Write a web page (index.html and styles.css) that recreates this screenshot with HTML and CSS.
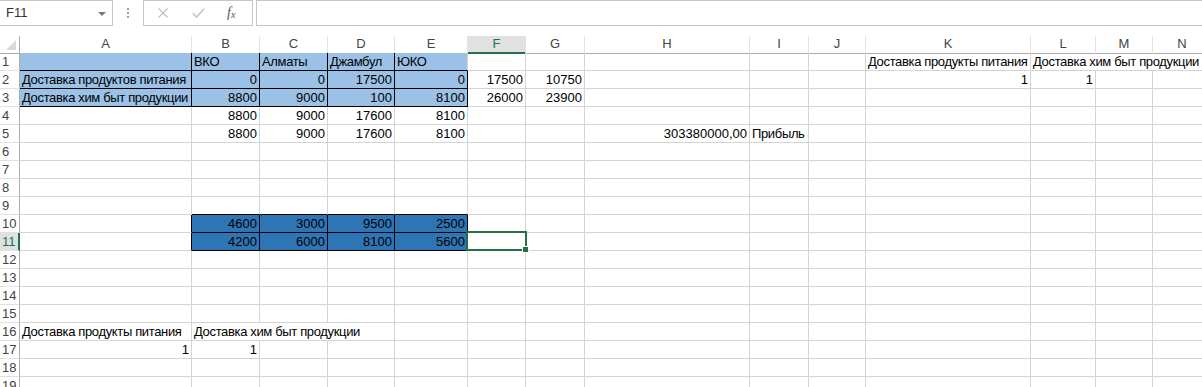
FILE: index.html
```
<!DOCTYPE html>
<html>
    <head>
        <meta charset="UTF-8">
        <link rel="stylesheet" href="styles.css">
        <title>Книга1 - Excel</title>
    </head>
    <body>
        <div class="bar">
            <div class="namebox">F11<span class="arrow"></span></div>
            <div class="grip"><span class="dots"></span></div>
            <div class="fxbox">
                <svg class="ico" width="12" height="10" viewBox="0 0 12 10"><path d="M1.5 0.5 L10.5 9.5 M10.5 0.5 L1.5 9.5" stroke="#C3C3C3" stroke-width="1.4" fill="none"/></svg>
                <svg class="ico" width="13" height="10" viewBox="0 0 13 10"><path d="M0.8 5.2 L4.6 9 L12.2 0.8" stroke="#C3C3C3" stroke-width="1.6" fill="none"/></svg>
                <span class="fx">f<sub>x</sub></span>
            </div>
            <div class="formula"></div>
        </div>

        <div class="sheet">
            <div class="row hd">
                <div class="corner"></div><div>A</div><div>B</div><div>C</div><div>D</div><div>E</div><div class="on">F</div><div>G</div><div>H</div><div>I</div><div>J</div><div>K</div><div>L</div><div>M</div><div>N</div>
            </div>
            <div class="row">
                <div class="rh">1</div><div class="c lb br bb"></div><div class="c lb br bb">ВКО</div><div class="c lb br bb">Алматы</div><div class="c lb br bb">Джамбул</div><div class="c lb bb">ЮКО</div><div class="c"></div><div class="c"></div><div class="c"></div><div class="c"></div><div class="c"></div><div class="c">Доставка продукты питания</div><div class="c s3">Доставка хим быт продукции</div>
            </div>
            <div class="row">
                <div class="rh">2</div><div class="c lb br bb">Доставка продуктов питания</div><div class="c lb br bb n">0</div><div class="c lb br bb n">0</div><div class="c lb br bb n">17500</div><div class="c lb br bb n">0</div><div class="c n">17500</div><div class="c n">10750</div><div class="c"></div><div class="c"></div><div class="c"></div><div class="c n">1</div><div class="c n">1</div><div class="c"></div><div class="c"></div>
            </div>
            <div class="row">
                <div class="rh">3</div><div class="c lb br bb">Доставка хим быт продукции</div><div class="c lb br bb n">8800</div><div class="c lb br bb n">9000</div><div class="c lb br bb n">100</div><div class="c lb br bb n">8100</div><div class="c n">26000</div><div class="c n">23900</div><div class="c"></div><div class="c"></div><div class="c"></div><div class="c"></div><div class="c"></div><div class="c"></div><div class="c"></div>
            </div>
            <div class="row">
                <div class="rh">4</div><div class="c"></div><div class="c n">8800</div><div class="c n">9000</div><div class="c n">17600</div><div class="c n">8100</div><div class="c"></div><div class="c"></div><div class="c"></div><div class="c"></div><div class="c"></div><div class="c"></div><div class="c"></div><div class="c"></div><div class="c"></div>
            </div>
            <div class="row">
                <div class="rh">5</div><div class="c"></div><div class="c n">8800</div><div class="c n">9000</div><div class="c n">17600</div><div class="c n">8100</div><div class="c"></div><div class="c"></div><div class="c n">303380000,00</div><div class="c">Прибыль</div><div class="c"></div><div class="c"></div><div class="c"></div><div class="c"></div><div class="c"></div>
            </div>
            <div class="row">
                <div class="rh">6</div><div class="c"></div><div class="c"></div><div class="c"></div><div class="c"></div><div class="c"></div><div class="c"></div><div class="c"></div><div class="c"></div><div class="c"></div><div class="c"></div><div class="c"></div><div class="c"></div><div class="c"></div><div class="c"></div>
            </div>
            <div class="row">
                <div class="rh">7</div><div class="c"></div><div class="c"></div><div class="c"></div><div class="c"></div><div class="c"></div><div class="c"></div><div class="c"></div><div class="c"></div><div class="c"></div><div class="c"></div><div class="c"></div><div class="c"></div><div class="c"></div><div class="c"></div>
            </div>
            <div class="row">
                <div class="rh">8</div><div class="c"></div><div class="c"></div><div class="c"></div><div class="c"></div><div class="c"></div><div class="c"></div><div class="c"></div><div class="c"></div><div class="c"></div><div class="c"></div><div class="c"></div><div class="c"></div><div class="c"></div><div class="c"></div>
            </div>
            <div class="row">
                <div class="rh">9</div><div class="c"></div><div class="c bb"></div><div class="c bb"></div><div class="c bb"></div><div class="c bb"></div><div class="c"></div><div class="c"></div><div class="c"></div><div class="c"></div><div class="c"></div><div class="c"></div><div class="c"></div><div class="c"></div><div class="c"></div>
            </div>
            <div class="row">
                <div class="rh">10</div><div class="c br"></div><div class="c db br bb n">4600</div><div class="c db br bb n">3000</div><div class="c db br bb n">9500</div><div class="c db br bb n">2500</div><div class="c"></div><div class="c"></div><div class="c"></div><div class="c"></div><div class="c"></div><div class="c"></div><div class="c"></div><div class="c"></div><div class="c"></div>
            </div>
            <div class="row">
                <div class="rh on">11</div><div class="c br"></div><div class="c db br bb n">4200</div><div class="c db br bb n">6000</div><div class="c db br bb n">8100</div><div class="c db br bb n">5600</div><div class="c sel"></div><div class="c"></div><div class="c"></div><div class="c"></div><div class="c"></div><div class="c"></div><div class="c"></div><div class="c"></div><div class="c"></div>
            </div>
            <div class="row">
                <div class="rh">12</div><div class="c"></div><div class="c"></div><div class="c"></div><div class="c"></div><div class="c"></div><div class="c"></div><div class="c"></div><div class="c"></div><div class="c"></div><div class="c"></div><div class="c"></div><div class="c"></div><div class="c"></div><div class="c"></div>
            </div>
            <div class="row">
                <div class="rh">13</div><div class="c"></div><div class="c"></div><div class="c"></div><div class="c"></div><div class="c"></div><div class="c"></div><div class="c"></div><div class="c"></div><div class="c"></div><div class="c"></div><div class="c"></div><div class="c"></div><div class="c"></div><div class="c"></div>
            </div>
            <div class="row">
                <div class="rh">14</div><div class="c"></div><div class="c"></div><div class="c"></div><div class="c"></div><div class="c"></div><div class="c"></div><div class="c"></div><div class="c"></div><div class="c"></div><div class="c"></div><div class="c"></div><div class="c"></div><div class="c"></div><div class="c"></div>
            </div>
            <div class="row">
                <div class="rh">15</div><div class="c"></div><div class="c"></div><div class="c"></div><div class="c"></div><div class="c"></div><div class="c"></div><div class="c"></div><div class="c"></div><div class="c"></div><div class="c"></div><div class="c"></div><div class="c"></div><div class="c"></div><div class="c"></div>
            </div>
            <div class="row">
                <div class="rh">16</div><div class="c">Доставка продукты питания</div><div class="c s3">Доставка хим быт продукции</div><div class="c"></div><div class="c"></div><div class="c"></div><div class="c"></div><div class="c"></div><div class="c"></div><div class="c"></div><div class="c"></div><div class="c"></div><div class="c"></div>
            </div>
            <div class="row">
                <div class="rh">17</div><div class="c n">1</div><div class="c n">1</div><div class="c"></div><div class="c"></div><div class="c"></div><div class="c"></div><div class="c"></div><div class="c"></div><div class="c"></div><div class="c"></div><div class="c"></div><div class="c"></div><div class="c"></div><div class="c"></div>
            </div>
            <div class="row">
                <div class="rh">18</div><div class="c"></div><div class="c"></div><div class="c"></div><div class="c"></div><div class="c"></div><div class="c"></div><div class="c"></div><div class="c"></div><div class="c"></div><div class="c"></div><div class="c"></div><div class="c"></div><div class="c"></div><div class="c"></div>
            </div>
            <div class="row">
                <div class="rh">19</div><div class="c"></div><div class="c"></div><div class="c"></div><div class="c"></div><div class="c"></div><div class="c"></div><div class="c"></div><div class="c"></div><div class="c"></div><div class="c"></div><div class="c"></div><div class="c"></div><div class="c"></div><div class="c"></div>
            </div>
        </div>
    </body>
</html>
```

FILE: styles.css
```
html,body{
    height:100%;
    margin:0;
    overflow:hidden;
    background:#fff;
    font-family:"Liberation Sans", Arial, sans-serif;
    font-size:13px;
}
*{
    box-sizing:border-box;
}

/* formula bar */
.bar{
    display:flex;
    height:26px;
    margin-bottom:10px;
}
.namebox{
    position:relative;
    width:113px;
    border:1px solid #C6C6C6;
    border-left:none;
    padding-left:6px;
    line-height:24px;
    color:#333;
}
.arrow{
    position:absolute;
    right:6px;
    top:11px;
    border-left:4px solid transparent;
    border-right:4px solid transparent;
    border-top:4px solid #777;
}
.grip{
    width:30px;
    display:flex;
    justify-content:center;
    align-items:center;
}
.dots{
    width:2px;
    height:2px;
    background:#A0A0A0;
    box-shadow:0 -4px 0 #A0A0A0, 0 4px 0 #A0A0A0;
}
.fxbox{
    width:110px;
    border:1px solid #C6C6C6;
    display:flex;
    align-items:center;
    padding-left:13px;
    gap:23px;
}
.ico{
    display:block;
}
.fx{
    font-family:"Liberation Serif", serif;
    font-style:italic;
    font-size:14px;
    color:#555;
    margin-left:-1px;
}
.fx sub{
    font-size:10px;
    vertical-align:-1px;
}
.formula{
    flex:1;
    margin-left:3px;
    border-top:1px solid #C6C6C6;
    border-bottom:1px solid #C6C6C6;
    border-left:1px solid #C6C6C6;
}

/* sheet */
.row{
    display:grid;
    grid-template-columns:20px 172px 68px 68px 67px 73px 58px 59px 165px 59px 57px 165px 65px 57px 59px;
    height:18px;
}
.hd{
    height:17px;
}
.hd div{
    border-right:1px solid #E1E1E1;
    border-bottom:1px solid #ABABAB;
    text-align:center;
    line-height:16px;
    color:#444;
}
.hd .on{
    background:#E1E1E1;
    color:#217346;
    border-bottom:2px solid #217346;
}
.hd .corner{
    position:relative;
    border-right:1px solid #ABABAB;
}
.corner::after{
    content:"";
    position:absolute;
    right:3px;
    bottom:3px;
    border-left:10px solid transparent;
    border-bottom:10px solid #DADADA;
}
.rh{
    border-right:1px solid #ABABAB;
    border-bottom:1px solid #E1E1E1;
    padding-left:2px;
    line-height:17px;
    color:#444;
}
.rh.on{
    background:#E1E1E1;
    color:#217346;
    border-right:2px solid #217346;
}
.c{
    border-right:1px solid #D4D4D4;
    border-bottom:1px solid #D4D4D4;
    padding:0 2px;
    line-height:17px;
    white-space:nowrap;
    letter-spacing:-0.35px;
    color:#000;
}
.n{
    text-align:right;
    letter-spacing:0;
}
.s3{
    grid-column:span 3;
}
.lb{
    background:#9BC2E6;
}
.db{
    background:#2E75B6;
}
.br{
    border-right-color:#000;
}
.bb{
    border-bottom-color:#000;
}
.sel{
    position:relative;
}
.sel::after{
    content:"";
    position:absolute;
    left:-2px;
    top:-2px;
    right:-2px;
    bottom:-1px;
    border:2px solid #217346;
}
.sel::before{
    content:"";
    position:absolute;
    right:-4px;
    bottom:-3px;
    width:5px;
    height:5px;
    background:#217346;
    border:1px solid #fff;
    z-index:1;
}
```
